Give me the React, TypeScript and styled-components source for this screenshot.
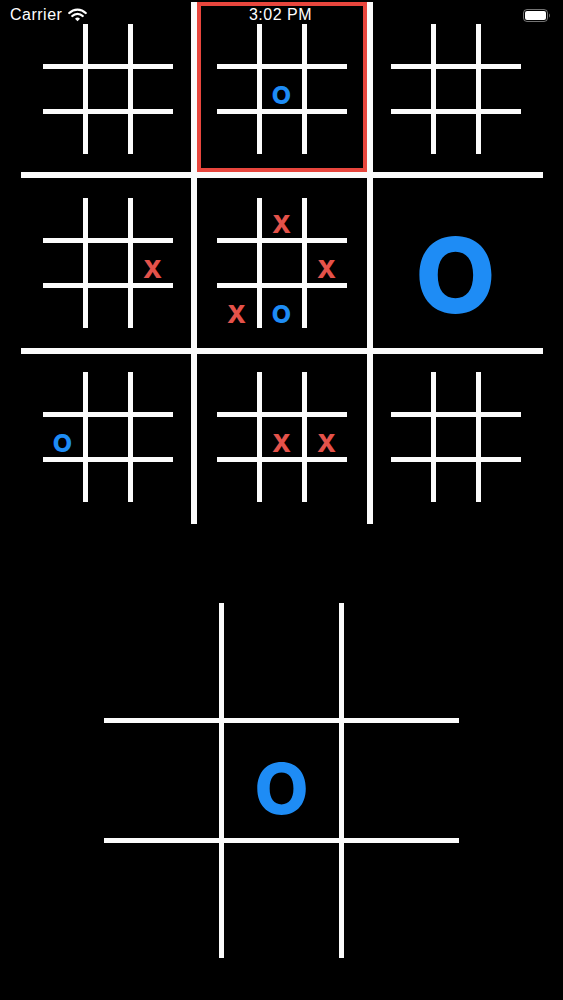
import React from 'react';
import styled, { createGlobalStyle } from 'styled-components';

type Kind = 'X' | 'O' | '';

const GlobalStyle = createGlobalStyle`
  html, body {
    margin: 0;
    padding: 0;
    background: #000;
  }
  body {
    font-family: "Liberation Sans", Arial, sans-serif;
  }
`;

const Screen = styled.div`
  position: relative;
  width: 563px;
  height: 1000px;
  background: #000;
  display: flex;
  flex-direction: column;
  align-items: center;
  overflow: hidden;
`;

const StatusBar = styled.div`
  position: absolute;
  top: 0;
  left: 0;
  right: 0;
  height: 30px;
  display: grid;
  grid-template-columns: 1fr auto 1fr;
  align-items: center;
  padding: 0 12px 0 10px;
  color: #fff;
  font-family: "Liberation Sans", Arial, sans-serif;
  font-size: 16px;
  letter-spacing: 0.5px;
  z-index: 2;
`;

const Left = styled.div`
  display: flex;
  align-items: center;
  gap: 6px;
`;

const Time = styled.div`
  text-align: center;
`;

const Right = styled.div`
  display: flex;
  justify-content: flex-end;
  align-items: center;
`;

const BigBoard = styled.div`
  margin-top: 2px;
  display: grid;
  grid-template-columns: repeat(3, 170px);
  grid-template-rows: repeat(3, 170px);
  gap: 6px;
  width: 522px;
  height: 522px;
  background: #fbfbfb;
`;

const BigCell = styled.div<{ $active?: boolean; $col: number; $row: number }>`
  background: #000;
  display: flex;
  align-items: center;
  justify-content: center;
  padding-left: ${(p) => (p.$col === 0 ? 4 : 0)}px;
  padding-right: ${(p) => (p.$col === 2 ? 4 : 0)}px;
  padding-top: ${(p) => (p.$row === 0 ? 4 : 0)}px;
  padding-bottom: ${(p) => (p.$row === 2 ? 4 : 0)}px;
  box-shadow: ${(p) => (p.$active ? 'inset 0 0 0 4px #e8463d' : 'none')};
  min-width: 0;
  min-height: 0;
`;

const Board = styled.div<{ $cell: number; $line: number; $top?: number }>`
  display: grid;
  grid-template-columns: repeat(3, ${(p) => p.$cell}px);
  grid-template-rows: repeat(3, ${(p) => p.$cell}px);
  gap: ${(p) => p.$line}px;
  margin-top: ${(p) => p.$top ?? 0}px;
  background: #fbfbfb;
  flex-shrink: 0;
`;

const Square = styled.div<{ $font: number }>`
  background: #000;
  display: flex;
  align-items: center;
  justify-content: center;
  font-size: ${(p) => p.$font}px;
  overflow: visible;
`;

const Glyph = styled.span<{ $kind: Kind; $font?: number; $drop?: number }>`
  font-family: Inter, "Open Sans", "DejaVu Sans", sans-serif;
  font-weight: 800;
  line-height: 1;
  padding-top: ${(p) => p.$drop ?? 0.24}em;
  ${(p) => (p.$font ? `font-size: ${p.$font}px;` : '')}
  color: ${(p) => (p.$kind === 'X' ? '#e4524a' : '#1e8cf5')};
`;

const WifiIcon = () => (
  <svg width="19" height="14" viewBox="0 0 19 14" fill="none">
    <path d="M1.3 5 A11.5 11.5 0 0 1 17.7 5" stroke="#fff" strokeWidth="2.3" strokeLinecap="round" />
    <path d="M4.3 8 A7.2 7.2 0 0 1 14.7 8" stroke="#fff" strokeWidth="2.3" strokeLinecap="round" />
    <path d="M9.5 13.2 L7 10.7 A3.5 3.5 0 0 1 12 10.7 Z" fill="#fff" />
  </svg>
);

const BatteryIcon = () => (
  <svg width="28" height="13" viewBox="0 0 28 13" fill="none">
    <rect x="0.5" y="0.5" width="24" height="12" rx="3.5" stroke="rgba(255,255,255,0.45)" />
    <rect x="2" y="2" width="21" height="9" rx="2" fill="#fff" />
    <path d="M26 4.5 C27.2 4.8 27.2 8.2 26 8.5 Z" fill="rgba(255,255,255,0.45)" />
  </svg>
);

const smallBoards: Kind[][] = [
  ['', '', '', '', '', '', '', '', ''],
  ['', '', '', '', 'O', '', '', '', ''],
  ['', '', '', '', '', '', '', '', ''],
  ['', '', '', '', '', 'X', '', '', ''],
  ['', 'X', '', '', '', 'X', 'X', 'O', ''],
  ['', '', '', '', '', '', '', '', ''],
  ['', '', '', 'O', '', '', '', '', ''],
  ['', '', '', '', 'X', 'X', '', '', ''],
  ['', '', '', '', '', '', '', '', ''],
];

const winners: Kind[] = ['', '', '', '', '', 'O', '', '', ''];

const bottomBoard: Kind[] = ['', '', '', '', 'O', '', '', '', ''];

const MiniBoard = ({
  cells,
  cell,
  line,
  font,
  drop,
  top,
}: {
  cells: Kind[];
  cell: number;
  line: number;
  font: number;
  drop?: number;
  top?: number;
}) => (
  <Board $cell={cell} $line={line} $top={top}>
    {cells.map((c, i) => (
      <Square key={i} $font={font}>
        {c && (
          <Glyph $kind={c} $drop={drop}>
            {c}
          </Glyph>
        )}
      </Square>
    ))}
  </Board>
);

export default function App() {
  return (
    <Screen>
      <GlobalStyle />
      <StatusBar>
        <Left>
          <span>Carrier</span>
          <WifiIcon />
        </Left>
        <Time>3:02 PM</Time>
        <Right>
          <BatteryIcon />
        </Right>
      </StatusBar>

      <BigBoard>
        {smallBoards.map((cells, i) => (
          <BigCell key={i} $active={i === 1} $col={i % 3} $row={Math.floor(i / 3)}>
            {winners[i] ? (
              <Glyph $kind={winners[i]} $font={104}>
                {winners[i]}
              </Glyph>
            ) : (
              <MiniBoard cells={cells} cell={40} line={5} font={25} drop={0.48} />
            )}
          </BigCell>
        ))}
      </BigBoard>

      <MiniBoard cells={bottomBoard} cell={115} line={5} font={70} top={79} />
    </Screen>
  );
}
